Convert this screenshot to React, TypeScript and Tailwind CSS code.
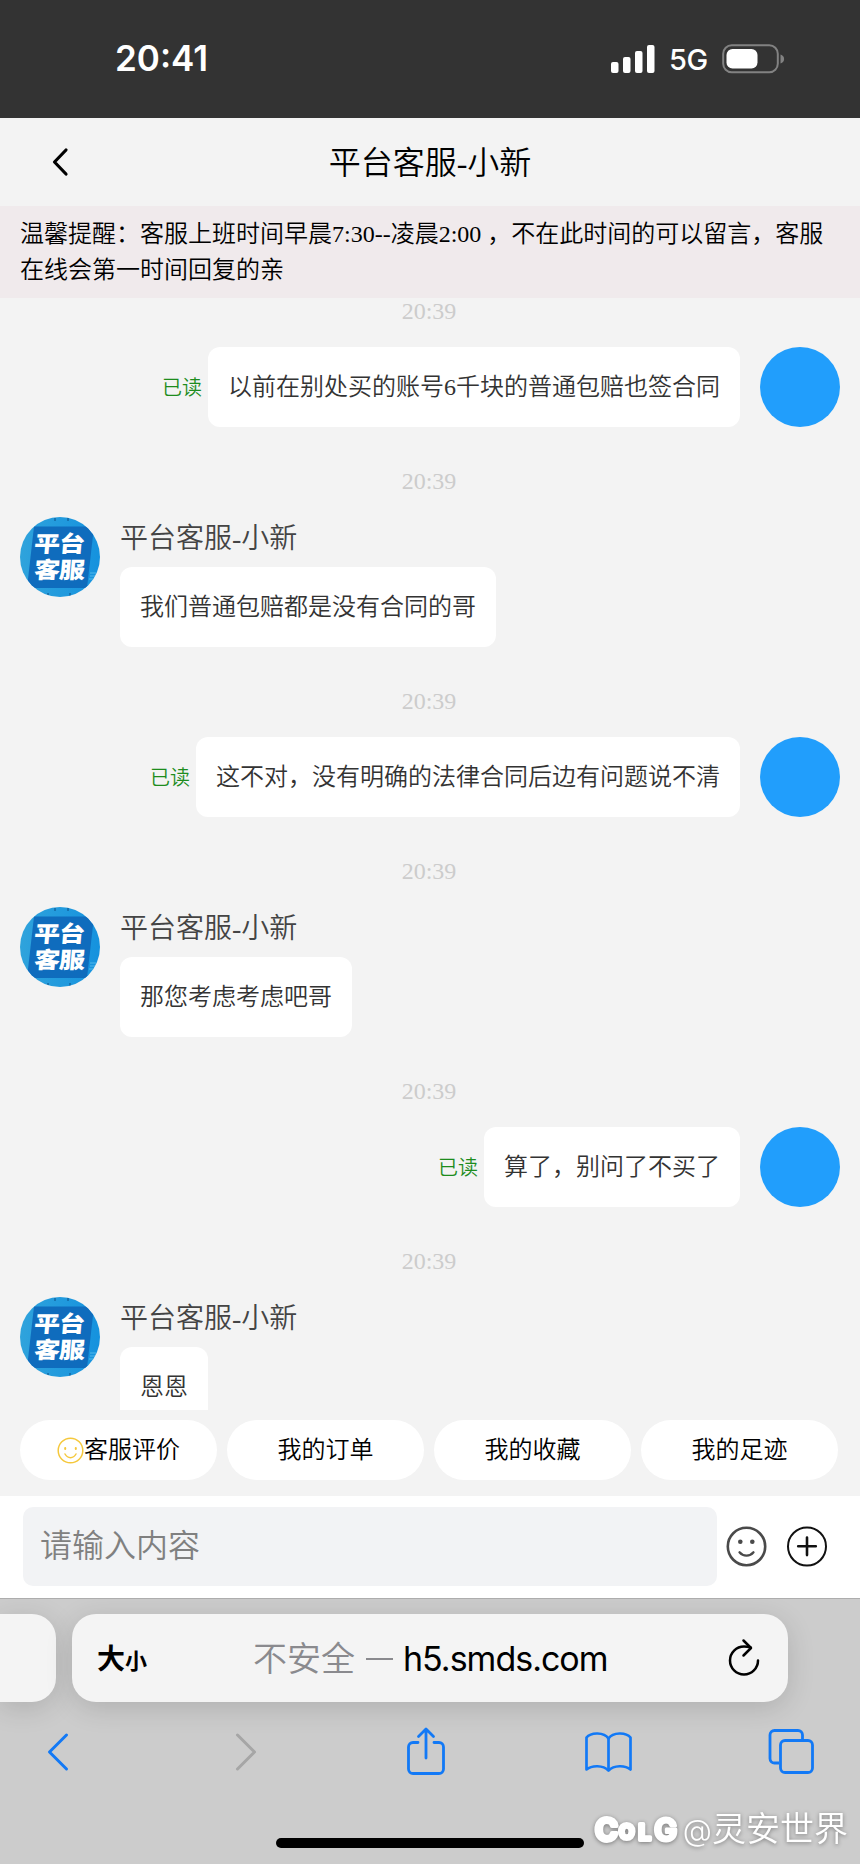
import type { ReactNode } from "react";

type Message = {
  id: number;
  time: string;
  mine: boolean;
  text: string;
};

const AGENT_NAME = "平台客服-小新";

const messages: Message[] = [
  { id: 1, time: "20:39", mine: true, text: "以前在别处买的账号6千块的普通包赔也签合同" },
  { id: 2, time: "20:39", mine: false, text: "我们普通包赔都是没有合同的哥" },
  { id: 3, time: "20:39", mine: true, text: "这不对，没有明确的法律合同后边有问题说不清" },
  { id: 4, time: "20:39", mine: false, text: "那您考虑考虑吧哥" },
  { id: 5, time: "20:39", mine: true, text: "算了，别问了不买了" },
  { id: 6, time: "20:39", mine: false, text: "恩恩" },
];

const shortcuts = ["客服评价", "我的订单", "我的收藏", "我的足迹"];

function StatusBar() {
  return (
    <div className="flex h-[118px] shrink-0 items-start justify-between bg-[#333333] pl-[115px] pr-[75px] pt-[38px] font-['Inter',sans-serif] text-white">
      <span className="text-[35px] font-semibold leading-[41px]">20:41</span>
      <div className="flex h-[41px] items-center">
        <svg width="44" height="28" viewBox="0 0 44 28" fill="currentColor" aria-hidden>
          <rect x="0" y="17" width="7.5" height="11" rx="2" />
          <rect x="12" y="12" width="7.5" height="16" rx="2" />
          <rect x="24" y="6" width="7.5" height="22" rx="2" />
          <rect x="36" y="0" width="7.5" height="28" rx="2" />
        </svg>
        <span className="ml-[14px] mt-[2px] w-[39px] text-[29px] font-medium leading-none tracking-[-0.4px]">5G</span>
        <svg className="ml-[14px]" width="63" height="30" viewBox="0 0 63 30" fill="none" aria-hidden>
          <rect x="1.2" y="1.2" width="54.6" height="27" rx="8.5" stroke="#828282" strokeWidth="2" />
          <rect x="4.5" y="5" width="31" height="19.5" rx="6" fill="white" />
          <path d="M58.5 10.5c2.4.8 3.6 2.4 3.6 4.5s-1.200 3.700-3.600 4.500z" fill="#828282" />
        </svg>
      </div>
    </div>
  );
}

function AgentAvatar() {
  return (
    <svg className="h-20 w-20 shrink-0 rounded-full" viewBox="0 0 80 80" aria-label={AGENT_NAME}>
      <defs>
        <linearGradient id="avatar-bg" x1="0" y1="0" x2="1" y2="0">
          <stop offset="0" stopColor="#2fa3dc" />
          <stop offset="1" stopColor="#1592de" />
        </linearGradient>
      </defs>
      <rect width="80" height="80" fill="url(#avatar-bg)" />
      <path d="M14 9.500H74L67 71H7z" fill="#0f6cbd" />
      <path d="M35 1v3M48 1v3M28 76v3M50 76v3" stroke="#0b4f88" strokeWidth="1" />
      <path d="M70 56h8M70 59h7M69 62h7" stroke="#63c3ee" strokeWidth="0.8" />
      <g fill="white" fontFamily="'Noto Sans CJK SC', sans-serif" fontWeight="900" fontSize="26">
        <text transform="translate(13.500 35.300) skewX(-5) scale(1 0.86)" textLength="51">
          平台
        </text>
        <text transform="translate(13.500 61.300) skewX(-5) scale(1 0.86)" textLength="51">
          客服
        </text>
      </g>
    </svg>
  );
}

function Bubble({ children }: { children: ReactNode }) {
  return (
    <div className="flex h-20 items-center rounded-xl bg-white px-5 text-2xl text-[#333333]">{children}</div>
  );
}

function MessageItem({ message }: { message: Message }) {
  return (
    <li className="mb-[41px]">
      <p className="mb-[23px] pr-[2px] text-center text-2xl leading-[26px] text-[#cccccc]">{message.time}</p>
      {message.mine ? (
        <div className="flex items-center justify-end pr-5">
          <span className="mr-[6px] pt-px text-xl text-[#1d8c1d]">已读</span>
          <Bubble>{message.text}</Bubble>
          <div className="ml-5 h-20 w-20 shrink-0 rounded-full bg-[#219efc]" />
        </div>
      ) : (
        <div className="flex items-start pl-5">
          <AgentAvatar />
          <div className="ml-5 flex flex-col items-start">
            <p className="mb-2 pt-[2px] text-[28px] leading-10 text-[#444444]">{AGENT_NAME}</p>
            <Bubble>{message.text}</Bubble>
          </div>
        </div>
      )}
    </li>
  );
}

function ShortcutSmile() {
  return (
    <svg width="27" height="27" viewBox="0 0 27 27" fill="none" stroke="#f5c83c" strokeLinecap="round" aria-hidden>
      <circle cx="13.500" cy="13.500" r="12.300" strokeWidth="1.500" />
      <path d="M8 17c1.500 2.600 3.300 3.700 5.500 3.700S17.500 19.600 19 17" strokeWidth="1.500" />
      <path d="M8.200 11v1M18.800 11v1" strokeWidth="2" />
    </svg>
  );
}

function InputBar() {
  return (
    <div className="flex h-[102px] shrink-0 items-start bg-white pl-[23px] pt-[11px]">
      <div className="flex h-[79px] w-[694px] items-center rounded-[10px] bg-[#f2f3f5] pb-[2px] pl-[17px] text-[32px] text-[#808080]">
        请输入内容
      </div>
      <svg className="ml-[9px] mt-[19px]" width="41" height="41" viewBox="0 0 41 41" fill="none" aria-hidden>
        <circle cx="20.500" cy="20.500" r="18.700" stroke="#4a4a4a" strokeWidth="2.600" />
        <circle cx="14.300" cy="15.700" r="2.300" fill="#4a4a4a" />
        <circle cx="26.300" cy="15.700" r="2.300" fill="#4a4a4a" />
        <path d="M13.500 26.300c1.800 2.200 4.200 3.300 7 3.300s5.200-1.100 7-3.300" stroke="#4a4a4a" strokeWidth="2.300" strokeLinecap="round" />
      </svg>
      <svg className="ml-[19px] mt-[19px]" width="42" height="41" viewBox="0 0 42 41" fill="none" stroke="#111111" aria-hidden>
        <circle cx="21" cy="20.500" r="19" strokeWidth="2" />
        <path d="M21 11.500v17.600M12.200 20.300h17.600" strokeWidth="2.600" strokeLinecap="round" />
      </svg>
    </div>
  );
}

function AddressBar() {
  return (
    <div className="flex gap-4">
      <div className="h-[88px] w-14 rounded-r-[24px] bg-[#f4f4f4] shadow-[0_6px_28px_rgba(0,0,0,0.14)]" />
      <div className="flex h-[88px] w-[716px] items-center rounded-[24px] bg-[#f4f4f4] pl-[25px] pt-[2px] font-['Inter','Noto_Sans_CJK_SC',sans-serif] shadow-[0_6px_28px_rgba(0,0,0,0.14)]">
        <div className="flex w-[156px] items-baseline font-bold leading-none text-black">
          <span className="text-[28px]">大</span>
          <span className="text-[22px]">小</span>
        </div>
        <div className="flex w-[380px] items-center whitespace-pre text-[34px] leading-none">
          <span className="text-[#8a8a8e]">不安全</span>
          <span className="ml-[11px] mr-[10px] h-[2.500px] w-[27px] bg-[#8a8a8e]" />
          <span className="font-normal tracking-[-1px] text-black">h5.smds.com</span>
        </div>
        <svg className="mb-[2px] ml-[94px]" width="34" height="40" viewBox="0 0 34 40" fill="none" stroke="black" strokeWidth="2.500" strokeLinecap="round" strokeLinejoin="round" aria-hidden>
          <path d="M31 22.500A14 14 0 1 1 17 8.500c2.500 0 4.500.3 6.500 1" />
          <path d="M16.500 2.500 24 10 16.500 17.500" />
        </svg>
      </div>
    </div>
  );
}

function BrowserToolbar() {
  return (
    <div className="mt-[25px] flex h-[50px] items-center text-[#1279f6]">
      <svg className="ml-[46px]" width="24" height="40" viewBox="0 0 24 40" fill="none" stroke="currentColor" strokeWidth="3" strokeLinecap="round" strokeLinejoin="round">
        <path d="M20.500 3 3.500 20l17 17" />
      </svg>
      <svg className="ml-[164px] text-[#a6a6a6]" width="24" height="40" viewBox="0 0 24 40" fill="none" stroke="currentColor" strokeWidth="3" strokeLinecap="round" strokeLinejoin="round">
        <path d="M3.500 3l17 17-17 17" />
      </svg>
      <svg className="ml-[148px]" width="40" height="50" viewBox="0 0 40 50" fill="none" stroke="currentColor" strokeWidth="2.800" strokeLinecap="round" strokeLinejoin="round">
        <path d="M12 15.500H7a4.500 4.500 0 0 0-4.500 4.500v22A4.500 4.500 0 0 0 7 46.500h26a4.500 4.500 0 0 0 4.500-4.500V20a4.500 4.500 0 0 0-4.500-4.500h-5" />
        <path d="M20 31V2.500M12.500 9.500l7.500-7.500 7.500 7.500" />
      </svg>
      <svg className="ml-[137px]" width="50" height="44" viewBox="0 0 50 44" fill="none" stroke="currentColor" strokeWidth="2.700" strokeLinecap="round" strokeLinejoin="round">
        <path d="M25.500 8.500C21 2 8 2 3.500 7.500V39.500C9 35 20 35 25.500 40.500 31 35 42 35 47.500 39.500V7.500C43 2 30 2 25.500 8.500Z" />
        <path d="M25.500 8.500v31" />
      </svg>
      <svg className="ml-[134px]" width="48" height="48" viewBox="0 0 48 48" fill="none" stroke="currentColor" strokeWidth="2.800" strokeLinejoin="round">
        <path d="M12 35H7.500A4.500 4.500 0 0 1 3 30.500V7A4.500 4.500 0 0 1 7.500 2.500H31A4.500 4.500 0 0 1 35.500 7v5" />
        <rect x="13.500" y="12.500" width="32" height="32" rx="4.500" />
      </svg>
    </div>
  );
}

function Watermark() {
  return (
    <div className="absolute bottom-[12px] right-[12px] flex items-center text-white drop-shadow-[0_1px_2px_rgba(0,0,0,0.4)]">
      <svg
        className="mr-[2px]"
        width="87"
        height="36"
        viewBox="0 0 87 36"
        fill="white"
        stroke="white"
        strokeLinejoin="round"
        strokeWidth="4"
        fontFamily="Inter, sans-serif"
        fontWeight="700"
        aria-label="COLG"
      >
        <text x="1" y="28.500" fontSize="31" strokeWidth="4">C</text>
        <text x="25" y="27" fontSize="20">O</text>
        <text x="44.500" y="27.500" fontSize="22">L</text>
        <text x="60" y="28.500" fontSize="31" strokeWidth="3">G</text>
      </svg>
      <span className="whitespace-nowrap font-['Inter','Noto_Sans_CJK_SC',sans-serif] text-[34px] leading-[44px]">
        <span className="text-[30px]">@</span>灵安世界
      </span>
    </div>
  );
}

export default function App() {
  return (
    <div
      lang="zh-CN"
      className="relative flex h-[1864px] w-[860px] flex-col overflow-hidden bg-[#f3f3f3] font-['Liberation_Serif','Noto_Sans_CJK_SC',sans-serif] font-[350]"
    >
      <StatusBar />

      <header className="flex h-[88px] shrink-0 items-center pl-[50px] pr-[70px] pt-px text-black">
        <svg className="mb-[2px]" width="20" height="32" viewBox="0 0 20 32" fill="none" stroke="currentColor" strokeWidth="3.200" strokeLinecap="round" strokeLinejoin="round" aria-hidden>
          <path d="M16 4 4.500 16 16 28" />
        </svg>
        <h1 className="flex-1 text-center text-[32px] font-[350]">{AGENT_NAME}</h1>
      </header>

      <p className="h-[92px] shrink-0 bg-[#f0eaec] px-5 py-[10px] text-2xl leading-9 text-black">
        温馨提醒：客服上班时间早晨7:30--凌晨2:00 ，不在此时间的可以留言，客服在线会第一时间回复的亲
      </p>

      <ul className="h-[1112px] shrink-0 overflow-hidden">
        {messages.map((message) => (
          <MessageItem key={message.id} message={message} />
        ))}
      </ul>

      <div className="grid h-[86px] shrink-0 grid-cols-4 gap-[10px] pb-4 pl-5 pr-[22px] pt-[10px]">
        {shortcuts.map((label, i) => (
          <button
            key={label}
            type="button"
            className="flex items-center justify-center rounded-full bg-white text-2xl text-black"
          >
            {i === 0 ? <ShortcutSmile /> : null}
            {label}
          </button>
        ))}
      </div>

      <InputBar />

      <footer className="relative h-[266px] shrink-0 overflow-hidden border-t border-[#adadad] bg-[#cccccc] pt-[15px]">
        <AddressBar />
        <BrowserToolbar />
        <div className="mx-auto mt-[61px] h-[10px] w-[308px] rounded-full bg-black" />
        <Watermark />
      </footer>
    </div>
  );
}
